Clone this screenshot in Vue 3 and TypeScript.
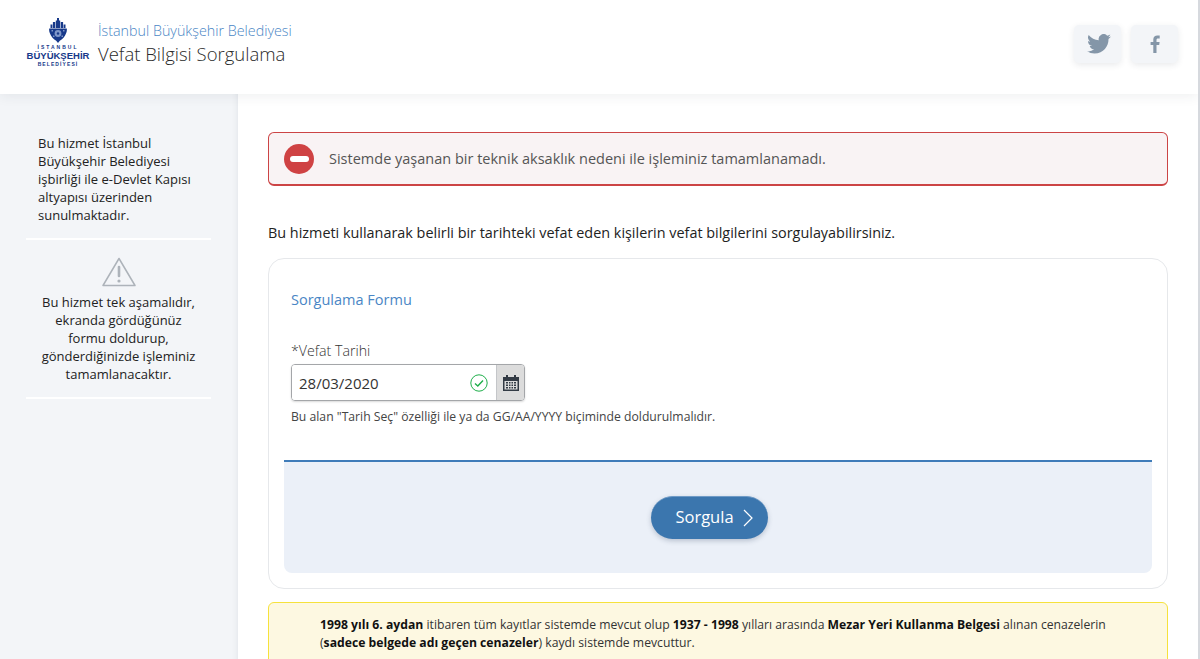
<template>
  <div class="page">
    <header class="top">
      <div class="brand">
        <div class="logo">
          <svg class="logo-mark" width="18" height="25" viewBox="0 0 18 25">
            <path d="M8 0h2v2.500H8zM6.800 2.500h4.400V10H6.800zM3.900 4h2.300v6H3.900zM11.800 4h2.300v6h-2.300zM1.500 6.500h1.900V10H1.500zM14.600 6.500h1.900V10h-1.900z" fill="#17398a" />
            <path d="M.2 10.500h17.600c.3 2-.1 3.500-.8 5-1 2.500-3 5.500-6.200 7.200L9 25l-1.800-2.300C4 21 2 18 1 15.500.3 14-.1 12.500.2 10.500z" fill="#17398a" />
            <circle cx="9" cy="15.500" r="3.400" fill="#7f97c9" />
            <circle cx="9" cy="15.500" r="1.200" fill="#17398a" />
            <path d="M2.500 12h1.500v1.500H2.500zM14 12h1.500v1.500H14zM4 17.500h1.500V19H4zM12.500 17.500H14V19h-1.500z" fill="#7f97c9" />
          </svg>
          <span class="logo-small logo-city">İSTANBUL</span>
          <span class="logo-big">BÜYÜKŞEHİR</span>
          <span class="logo-small">BELEDİYESİ</span>
        </div>
        <div class="titles">
          <div class="org">İstanbul Büyükşehir Belediyesi</div>
          <div class="service">Vefat Bilgisi Sorgulama</div>
        </div>
      </div>
      <div class="social">
        <a class="social-btn">
          <svg class="tw" width="24" height="20" viewBox="0 0 24 20">
            <path fill="#8496a8" d="M24 2.400a9.800 9.800 0 0 1-2.800.8A4.900 4.900 0 0 0 23.300.500a9.800 9.800 0 0 1-3.100 1.200 4.900 4.900 0 0 0-8.400 4.500A14 14 0 0 1 1.700.900a4.900 4.900 0 0 0 1.500 6.600 4.900 4.900 0 0 1-2.200-.6v.1a4.900 4.900 0 0 0 3.900 4.800 4.900 4.900 0 0 1-2.200.1 4.900 4.900 0 0 0 4.600 3.400A9.900 9.900 0 0 1 0 17.300 14 14 0 0 0 7.500 19.500c9.100 0 14-7.500 14-14v-.6A10 10 0 0 0 24 2.400z" />
          </svg>
        </a>
        <a class="social-btn">
          <svg width="10" height="18" viewBox="0 0 10 18">
            <path fill="#8496a8" d="M6.500 18V10h2.700l.4-3.100H6.500V4.900c0-.9.3-1.500 1.600-1.500h1.600V.6C9.400.5 8.500.5 7.400.5 5 .5 3.300 1.900 3.300 4.600v2.300H.6V10h2.700v8z" />
          </svg>
        </a>
      </div>
    </header>

    <div class="body">
      <aside class="side">
        <div class="side-block">
          <p class="side-left">Bu hizmet İstanbul Büyükşehir Belediyesi işbirliği ile e-Devlet Kapısı altyapısı üzerinden sunulmaktadır.</p>
        </div>
        <div class="side-block side-warn">
          <svg width="34" height="30" viewBox="0 0 34 30" fill="none">
            <path d="M17 1.500 L33 28.500 H1 Z" stroke="#adb3ba" stroke-width="1.500" stroke-linejoin="round" />
            <path d="M17 10v9" stroke="#adb3ba" stroke-width="2.600" stroke-linecap="round" />
            <circle cx="17" cy="24" r="1.600" fill="#adb3ba" />
          </svg>
          <p>Bu hizmet tek aşamalıdır, ekranda gördüğünüz formu doldurup, gönderdiğinizde işleminiz tamamlanacaktır.</p>
        </div>
      </aside>

      <main class="main">
        <div class="alert">
          <span class="alert-icon"><i></i></span>
          <span>Sistemde yaşanan bir teknik aksaklık nedeni ile işleminiz tamamlanamadı.</span>
        </div>

        <p class="intro">Bu hizmeti kullanarak belirli bir tarihteki vefat eden kişilerin vefat bilgilerini sorgulayabilirsiniz.</p>

        <form class="card" @submit.prevent>
          <div class="form-top">
            <h2>Sorgulama Formu</h2>
            <label for="date">*Vefat Tarihi</label>
            <div class="date-field">
              <div class="date-input">
                <input id="date" v-model="date" type="text" />
                <svg width="18" height="18" viewBox="0 0 18 18" fill="none">
                  <circle cx="9" cy="9" r="8.200" stroke="#1fae4b" stroke-width="1" />
                  <path d="M5 9.500l2.800 2.500L13 6.500" stroke="#1fae4b" stroke-width="1.400" />
                </svg>
              </div>
              <button type="button" class="cal-btn" aria-label="Tarih Seç">
                <svg width="16" height="16" viewBox="0 0 16 16">
                  <path fill="#333b45" d="M3 0h2v2h6V0h2v2h3v14H0V2h3zM1.500 6v8.500h13V6z" />
                  <path fill="#333b45" d="M3 7h2v1.500H3zM6 7h1.500v1.500H6zM8.500 7H10v1.500H8.500zM11 7h2v1.500h-2zM3 9.500h2V11H3zM6 9.500h1.500V11H6zM8.500 9.500H10V11H8.500zM11 9.500h2V11h-2zM3 12h2v1.500H3zM6 12h1.500v1.500H6zM8.500 12H10v1.500H8.500zM11 12h2v1.500h-2z" />
                </svg>
              </button>
            </div>
            <div class="hint">Bu alan "Tarih Seç" özelliği ile ya da GG/AA/YYYY biçiminde doldurulmalıdır.</div>
          </div>
          <div class="form-bottom">
            <button type="submit" class="submit">
              <span class="submit-label">Sorgula</span>
              <svg width="10" height="18" viewBox="0 0 10 18" fill="none">
                <path d="M1 1l8 8-8 8" stroke="#fff" stroke-width="1.200" />
              </svg>
            </button>
          </div>
        </form>

        <div class="note">
          <p><b>1998 yılı 6. aydan</b> itibaren tüm kayıtlar sistemde mevcut olup <b>1937 - 1998</b> yılları arasında <b>Mezar Yeri Kullanma Belgesi</b> alınan cenazelerin (<b>sadece belgede adı geçen cenazeler</b>) kaydı sistemde mevcuttur.</p>
        </div>
      </main>
    </div>
  </div>
</template>

<script setup lang="ts">
import { ref } from 'vue'

const date = ref('28/03/2020')
</script>

<style>
html,
body {
  margin: 0;
  height: 100%;
  overflow: hidden;
  background: #fff;
}
</style>

<style scoped>
.page {
  height: 659px;
  box-sizing: border-box;
  overflow: hidden;
  border-right: 2px solid #d6d9de;
  font-family: "Open Sans", "Noto Sans", sans-serif;
  color: #222;
}

.top {
  position: relative;
  z-index: 2;
  height: 94px;
  box-sizing: border-box;
  padding: 0 20px 0 27px;
  display: flex;
  align-items: flex-start;
  justify-content: space-between;
  background: #fff;
  box-shadow: 0 2px 12px rgba(40, 50, 70, 0.08);
}

.brand {
  display: flex;
  align-items: flex-start;
  gap: 9px;
  padding-top: 18px;
}

.logo {
  display: flex;
  flex-direction: column;
  align-items: center;
  width: 62px;
  color: #17398a;
  font-family: "Liberation Sans", sans-serif;
  font-weight: 700;
  line-height: 1;
}

.logo-mark {
  margin-bottom: 2px;
}

.logo-small {
  font-size: 5px;
  letter-spacing: 1.100px;
  line-height: 5px;
  white-space: nowrap;
}

.logo-city {
  letter-spacing: 2px;
}

.logo-big {
  font-size: 9.500px;
  line-height: 12px;
  white-space: nowrap;
}

.titles {
  margin-top: 3px;
  font-weight: 300;
}

.org {
  font-size: 14.300px;
  line-height: 20px;
  color: #4a86c5;
}

.service {
  font-size: 18.500px;
  line-height: 26px;
  color: #2a2a2a;
}

.social {
  display: flex;
  gap: 10px;
  padding-top: 25px;
}

.social-btn {
  width: 47px;
  height: 38px;
  border-radius: 5px;
  background: #f3f5f8;
  box-shadow: 0 2px 6px rgba(40, 50, 70, 0.1);
  display: flex;
  align-items: center;
  justify-content: center;
}

.tw {
  margin-left: 3px;
}

.body {
  display: flex;
  min-height: 565px;
}

.side {
  flex: 0 0 238px;
  box-sizing: border-box;
  padding: 40px 27px 0 26px;
  background: #f3f5f8;
  box-shadow: inset -6px 0 6px -6px rgba(40, 50, 70, 0.1);
  font-size: 13px;
  line-height: 18px;
}

.side p {
  margin: 0;
}

.side-block {
  padding: 0 14px 14px;
  border-bottom: 2px solid #fff;
}

.side-left {
  margin-left: -2px !important;
}

.side-warn {
  padding-top: 17px;
  text-align: center;
}

.side-warn svg {
  display: block;
  margin: 0 auto 6px;
}

.main {
  flex: 1;
  padding: 38px 30px 0;
}

.alert {
  height: 54px;
  box-sizing: border-box;
  display: flex;
  align-items: center;
  gap: 15px;
  padding-left: 15px;
  border: 1px solid #cc4445;
  border-bottom-width: 2px;
  border-radius: 6px;
  background: #f9f3f4;
  color: #555;
  font-size: 14.500px;
}

.alert-icon {
  width: 30px;
  height: 30px;
  border-radius: 50%;
  background: #cf4243;
  display: flex;
  align-items: center;
  justify-content: center;
}

.alert-icon i {
  width: 19px;
  height: 6px;
  border-radius: 3px;
  background: #fff;
}

.intro {
  margin: 37px 0 15px;
  font-size: 14.400px;
  line-height: 20px;
  color: #222;
}

.card {
  display: block;
  height: 331px;
  box-sizing: border-box;
  padding: 0 15px;
  border: 1px solid #e6e8eb;
  border-radius: 16px;
  background: #fff;
}

.form-top {
  height: 203px;
  box-sizing: border-box;
  padding: 31px 7px 0;
  border-bottom: 2px solid #3f7cb9;
}

.form-top h2 {
  margin: 0 0 31px;
  font-size: 14.500px;
  line-height: 20px;
  font-weight: 400;
  color: #4a86c5;
}

.form-top label {
  display: block;
  font-size: 14.200px;
  line-height: 20px;
  font-weight: 300;
  color: #333;
  margin-bottom: 3px;
}

.date-field {
  display: flex;
  width: 234px;
  height: 37px;
  box-sizing: border-box;
  border: 1px solid #a4a6a9;
  border-radius: 4px;
  box-shadow: 0 1px 2px rgba(0, 0, 0, 0.15);
  overflow: hidden;
}

.date-input {
  flex: 1;
  min-width: 0;
  display: flex;
  align-items: center;
  padding-right: 8px;
  background: #fff;
}

.date-input input {
  flex: 1;
  min-width: 0;
  border: none;
  outline: none;
  padding: 0 0 0 7px;
  font: 400 15px "Open Sans", sans-serif;
  color: #333;
  background: transparent;
}

.cal-btn {
  flex: 0 0 28px;
  padding: 0;
  border: none;
  border-left: 1px solid #c4c6c9;
  background: #dcdcdc;
  display: flex;
  align-items: center;
  justify-content: center;
}

.hint {
  margin-top: 8px;
  font-size: 12.200px;
  line-height: 16px;
  color: #444;
}

.form-bottom {
  height: 111px;
  display: flex;
  align-items: center;
  justify-content: center;
  padding-right: 17px;
  background: #ebf0f8;
  border-radius: 0 0 8px 8px;
}

.submit {
  width: 117px;
  height: 43px;
  padding: 0 0 0 9px;
  border: none;
  border-top: 1px solid #6f9bc7;
  border-radius: 22px;
  background: #3b76ae;
  box-shadow: 0 2px 5px rgba(40, 60, 90, 0.25);
  color: #fff;
  font: 400 16.500px "Open Sans", sans-serif;
  display: flex;
  align-items: center;
  justify-content: center;
  gap: 9px;
}

.submit-label {
  margin-top: -3px;
}

.note {
  margin-top: 13px;
  height: 100px;
  box-sizing: border-box;
  padding: 13px 40px 0 51px;
  border: 1px solid #f6e23c;
  border-radius: 6px;
  background: #fdf8e1;
  font-size: 12.200px;
  line-height: 18px;
  color: #333;
}

.note p {
  margin: 0;
}

.note b {
  color: #111;
}
</style>
